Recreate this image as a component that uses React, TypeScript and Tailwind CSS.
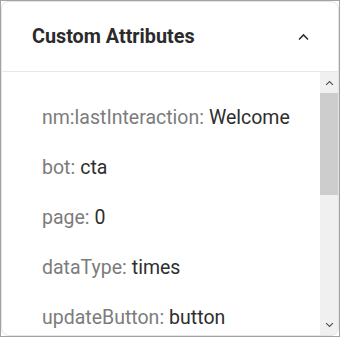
const rows: [string, string][] = [
  ['nm:lastInteraction:', 'Welcome'],
  ['bot:', 'cta'],
  ['page:', '0'],
  ['dataType:', 'times'],
  ['updateButton:', 'button'],
];

function Chevron({ up, className }: { up?: boolean; className?: string }) {
  return (
    <svg width="13" height="8" viewBox="0 0 12 8" className={className}>
      <path
        d={up ? 'M1.5 6.5 L6 2 L10.5 6.5' : 'M1.5 1.5 L6 6 L10.5 1.5'}
        fill="none"
        stroke="currentColor"
        strokeWidth="1.6"
      />
    </svg>
  );
}

export default function App() {
  return (
    <div
      className="w-[340px] h-[337px] border border-[#a3a3a3] bg-white overflow-hidden"
      style={{ fontFamily: 'Roboto, "Liberation Sans", sans-serif' }}
    >
      <div className="h-full rounded-lg border border-[#e4e4e4] flex flex-col overflow-hidden">
        <div className="h-[70px] shrink-0 flex items-center justify-between pl-[30px] pr-[28px] border-b border-[#e8e8e8]">
          <span className="text-[19.8px] font-bold text-[#2b2b2b]">Custom Attributes</span>
          <Chevron up className="text-[#333]" />
        </div>
        <div className="flex flex-1 min-h-0">
          <div className="flex-1 pl-10 pt-[21px] overflow-hidden">
            {rows.map(([k, v]) => (
              <div key={k} className="h-[50px] flex items-center text-[19.5px] whitespace-nowrap">
                <span className="text-[#7c7c7c]">{k}</span>
                <span className="ml-[5px] text-[#2e2e2e]">{v}</span>
              </div>
            ))}
          </div>
          <div className="w-[18px] shrink-0 bg-[#f0f0f0] flex flex-col">
            <div className="h-[21px] flex items-center justify-center text-[#555]">
              <Chevron up className="w-[9px] h-[6px]" />
            </div>
            <div className="h-[102px] bg-[#cdcdcd]" />
            <div className="flex-1" />
            <div className="h-[21px] flex items-center justify-center text-[#555]">
              <Chevron className="w-[9px] h-[6px]" />
            </div>
          </div>
        </div>
      </div>
    </div>
  );
}
